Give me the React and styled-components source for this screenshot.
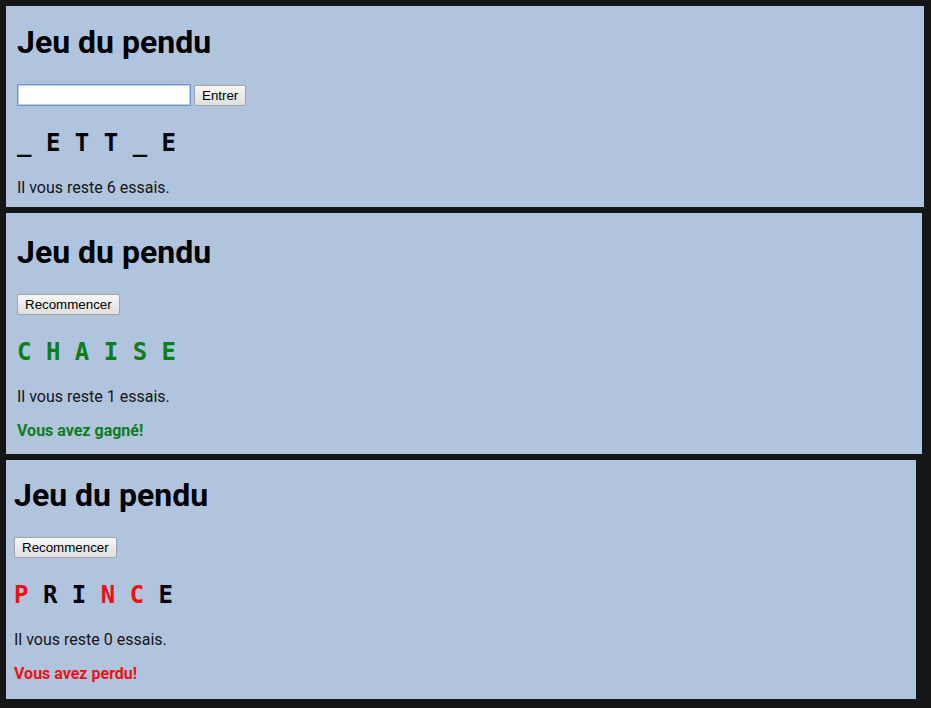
import React from "react";
import styled, { createGlobalStyle } from "styled-components";

const Global = createGlobalStyle`
  html, body { margin: 0; padding: 0; background: #141618; }
  body { font-family: Roboto, "Liberation Sans", sans-serif; }
`;

const Page = styled.div`
  display: flex;
  flex-direction: column;
  align-items: flex-start;
  gap: 6px;
  padding: 6px;
  box-sizing: border-box;
  min-height: 708px;
`;

const Panel = styled.section`
  box-sizing: border-box;
  width: ${(p) => p.$width}px;
  height: ${(p) => p.$height}px;
  background: #b0c4de;
  padding: ${(p) => p.$top}px 10px 0 ${(p) => p.$left}px;
  display: flex;
  flex-direction: column;
  align-items: flex-start;
`;

const Title = styled.h1`
  margin: 0 0 23px;
  font-family: Roboto, "Liberation Sans", sans-serif;
  font-size: 32px;
  font-weight: 700;
  color: #000;
  line-height: normal;
`;

const Controls = styled.form`
  display: flex;
  align-items: center;
  gap: 3px;
  margin: 0;
`;

const TextInput = styled.input`
  box-sizing: border-box;
  width: 174px;
  height: 22px;
  margin: 0;
  background: #fff;
  border: 1px solid #7196cc;
  box-shadow: inset 0 0 0 1px #b9cde8;
  outline: none;
  padding: 1px 3px;
  font: 13.33px "Liberation Sans", Arial, sans-serif;
`;

const Button = styled.button`
  box-sizing: border-box;
  height: 21px;
  margin: 0;
  padding: 0 7px;
  background: linear-gradient(#f7f7f7, #dfdfdf);
  border: 1px solid #a3a3a3;
  border-radius: 2px;
  font: 13.33px "Liberation Sans", Arial, sans-serif;
  color: #000;
`;

const Word = styled.div`
  margin-top: 23px;
  font-family: "DejaVu Sans Mono", "Liberation Mono", monospace;
  font-size: 24px;
  font-weight: 700;
  white-space: pre;
  color: #000;
`;

const Letter = styled.span`
  color: ${(p) => p.$color || "#000"};
`;

const Info = styled.p`
  margin: 21px 0 0;
  font-size: 16px;
  color: #151515;
`;

const Result = styled.p`
  margin: 15px 0 0;
  font-size: 16px;
  font-weight: 700;
  color: ${(p) => p.$color};
`;

function WordView({ letters }) {
  return (
    <Word>
      {letters.map((l, i) => (
        <React.Fragment key={i}>
          {i > 0 ? " " : ""}
          <Letter $color={l.color}>{l.ch}</Letter>
        </React.Fragment>
      ))}
    </Word>
  );
}

const GREEN = "#0b7e1b";
const RED = "#ee1111";

const games = [
  {
    width: 918,
    height: 201,
    top: 17,
    left: 11,
    playing: true,
    letters: ["_", "E", "T", "T", "_", "E"].map((ch) => ({ ch })),
    tries: 6,
  },
  {
    width: 916,
    height: 241,
    top: 20,
    left: 11,
    letters: ["C", "H", "A", "I", "S", "E"].map((ch) => ({ ch, color: GREEN })),
    tries: 1,
    result: { text: "Vous avez gagné!", color: GREEN },
  },
  {
    width: 910,
    height: 239,
    top: 16,
    left: 8,
    letters: [
      { ch: "P", color: RED },
      { ch: "R" },
      { ch: "I" },
      { ch: "N", color: RED },
      { ch: "C", color: RED },
      { ch: "E" },
    ],
    tries: 0,
    result: { text: "Vous avez perdu!", color: RED },
  },
];

export default function App() {
  return (
    <>
      <Global />
      <Page>
        {games.map((g, i) => (
          <Panel key={i} $width={g.width} $height={g.height} $top={g.top} $left={g.left}>
            <Title>Jeu du pendu</Title>
            <Controls onSubmit={(e) => e.preventDefault()}>
              {g.playing ? (
                <>
                  <TextInput type="text" />
                  <Button type="submit">Entrer</Button>
                </>
              ) : (
                <Button type="button">Recommencer</Button>
              )}
            </Controls>
            <WordView letters={g.letters} />
            <Info>Il vous reste {g.tries} essais.</Info>
            {g.result && <Result $color={g.result.color}>{g.result.text}</Result>}
          </Panel>
        ))}
      </Page>
    </>
  );
}
